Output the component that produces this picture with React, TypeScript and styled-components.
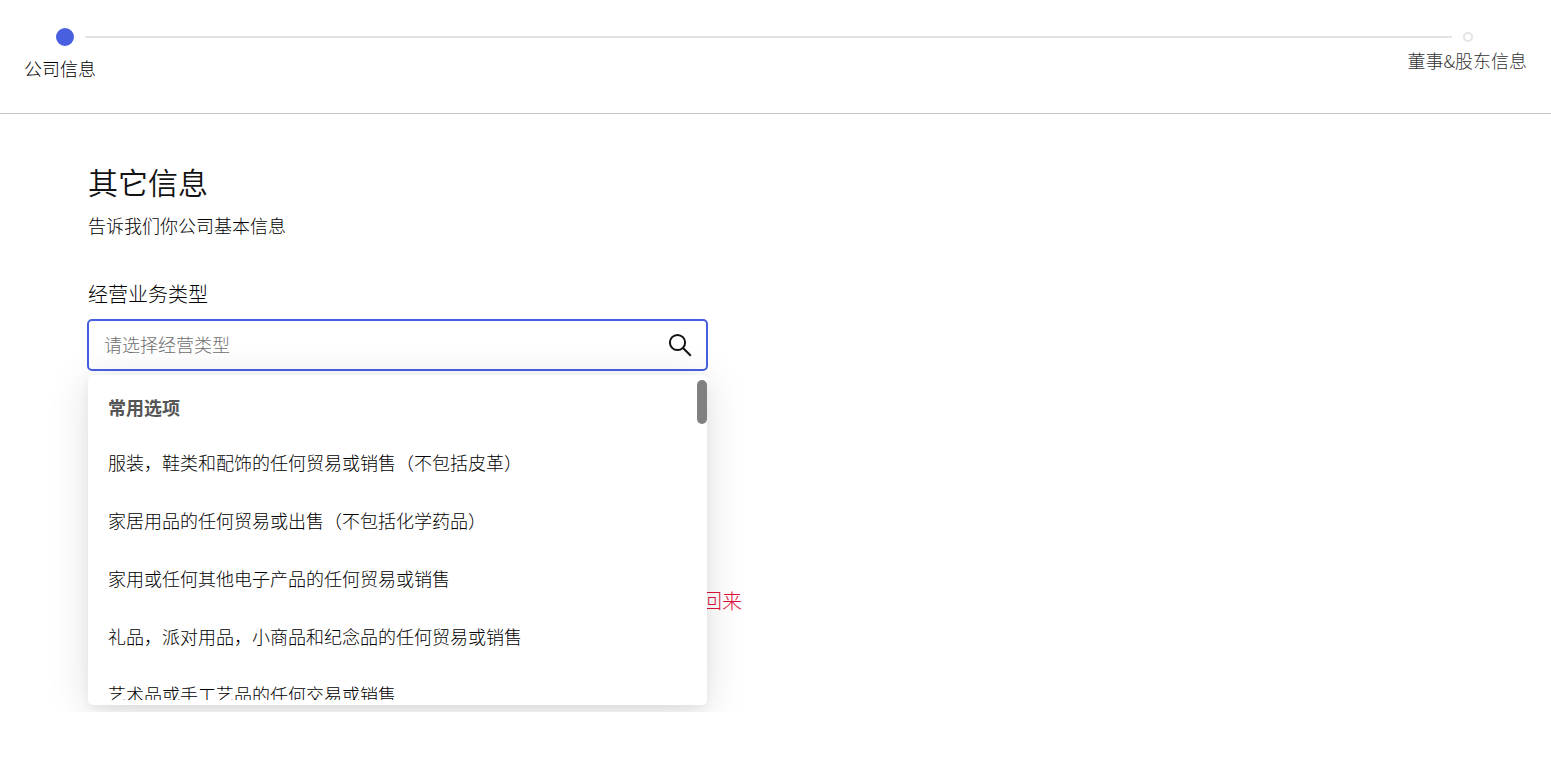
import React from "react";
import styled, { createGlobalStyle } from "styled-components";

const GlobalStyle = createGlobalStyle`
  *, *::before, *::after { box-sizing: border-box; }
  body {
    margin: 0;
    background: #fff;
    color: #000;
    font-family: "Noto Sans CJK SC", "Noto Sans", sans-serif;
    font-size: 18px;
    font-weight: 300;
    line-height: 24px;
  }
`;

const Page = styled.div`
  display: flex;
  flex-direction: column;
  min-height: 100vh;
  padding-bottom: 50px;
`;

const Header = styled.header`
  padding: 28px 24px 33px;
  border-bottom: 1px solid #c4c4c4;
`;

const Rail = styled.div`
  display: flex;
  align-items: center;
  gap: 11px;
  padding: 0 54px 0 32px;
`;

const Dot = styled.span<{ $active?: boolean }>`
  flex: none;
  width: ${(p) => (p.$active ? 18 : 10)}px;
  height: ${(p) => (p.$active ? 18 : 10)}px;
  border-radius: 50%;
  border: 2px solid ${(p) => (p.$active ? "#485fe0" : "#e4e4e4")};
  background: ${(p) => (p.$active ? "#485fe0" : "#fff")};
`;

const RailLine = styled.span`
  flex: 1;
  height: 2px;
  background: #e4e4e4;
`;

const StepLabels = styled.ol`
  display: flex;
  justify-content: space-between;
  margin: 0;
  padding: 2px 0 0;
  list-style: none;
`;

const StepLabel = styled.li<{ $active?: boolean }>`
  padding-top: ${(p) => (p.$active ? 8 : 0)}px;
  color: ${(p) => (p.$active ? "#000" : "#333")};
`;

const Main = styled.main`
  flex: 1;
  padding: 47px 24px 0 88px;
  overflow: hidden;
`;

const Form = styled.form`
  display: flex;
  flex-direction: column;
  max-width: 654px;
`;

const Title = styled.h1`
  margin: 0;
  color: #121212;
  font-size: 30px;
  font-weight: 350;
  line-height: 40px;
`;

const Subtitle = styled.p`
  margin: 12px 0 42px;
`;

const Field = styled.div`
  position: relative;
  max-width: 619px;
`;

const FieldLabel = styled.label`
  display: block;
  margin-bottom: 10px;
  font-size: 20px;
  line-height: 30px;
`;

const SearchBox = styled.div`
  display: flex;
  align-items: center;
  height: 52px;
  margin: 0 -1px;
  padding: 0 14px 0 15px;
  border: 2px solid #485fe0;
  border-radius: 5px;
`;

const SearchInput = styled.input`
  flex: 1;
  min-width: 0;
  height: 46px;
  padding: 0 0 2px;
  border: 0;
  outline: 0;
  background: transparent;
  color: inherit;
  font: inherit;

  &::placeholder {
    color: #707070;
    opacity: 1;
  }
`;

const SearchButton = styled.button`
  display: flex;
  padding: 0;
  border: 0;
  background: none;
  color: #121212;
`;

const Menu = styled.div`
  position: absolute;
  top: calc(100% + 4px);
  left: 0;
  right: 0;
  padding: 5px 0;
  border-radius: 5px;
  background: #fff;
  box-shadow: 0 5px 40px rgba(0, 0, 0, 0.13), 0 5px 10px rgba(0, 0, 0, 0.05);
`;

const MenuList = styled.ul`
  height: 320px;
  margin: 0;
  padding: 0 20px;
  overflow-y: auto;
  scrollbar-width: none;
  list-style: none;
`;

const GroupName = styled.li`
  padding: 15px 0 14px;
  color: #555;
  font-weight: 700;
`;

const Option = styled.li`
  padding: 17px 0;
`;

const Thumb = styled.span`
  position: absolute;
  top: 5px;
  right: 0;
  width: 10px;
  height: 44px;
  border-radius: 5px;
  background: #808080;
`;

const BackNote = styled.p`
  align-self: flex-end;
  margin: 215px 0 0;
  color: #e0103a;
  font-size: 20px;
  line-height: 30px;
`;

const options = [
  "服装，鞋类和配饰的任何贸易或销售（不包括皮革）",
  "家居用品的任何贸易或出售（不包括化学药品）",
  "家用或任何其他电子产品的任何贸易或销售",
  "礼品，派对用品，小商品和纪念品的任何贸易或销售",
  "艺术品或手工艺品的任何交易或销售",
];

export default function App() {
  return (
    <Page>
      <GlobalStyle />
      <Header>
        <Rail aria-hidden="true">
          <Dot $active />
          <RailLine />
          <Dot />
        </Rail>
        <StepLabels>
          <StepLabel $active aria-current="step">公司信息</StepLabel>
          <StepLabel>董事&amp;股东信息</StepLabel>
        </StepLabels>
      </Header>
      <Main>
        <Form onSubmit={(e) => e.preventDefault()}>
          <Title>其它信息</Title>
          <Subtitle>告诉我们你公司基本信息</Subtitle>
          <Field>
            <FieldLabel htmlFor="business-type">经营业务类型</FieldLabel>
            <SearchBox>
              <SearchInput
                id="business-type"
                type="text"
                role="combobox"
                aria-expanded="true"
                aria-controls="business-options"
                placeholder="请选择经营类型"
              />
              <SearchButton type="submit" aria-label="搜索">
                <svg width="24" height="24" viewBox="0 0 24 24" fill="none" stroke="currentColor" strokeWidth="2">
                  <circle cx="9.5" cy="9.5" r="7.6" />
                  <path d="M14.8 14.8 22.8 22.8" />
                </svg>
              </SearchButton>
            </SearchBox>
            <Menu>
              <MenuList id="business-options" role="listbox" aria-label="经营业务类型">
                <GroupName role="presentation">常用选项</GroupName>
                {options.map((name) => (
                  <Option key={name} role="option" aria-selected="false">
                    {name}
                  </Option>
                ))}
              </MenuList>
              <Thumb />
            </Menu>
          </Field>
          <BackNote>回来</BackNote>
        </Form>
      </Main>
    </Page>
  );
}
